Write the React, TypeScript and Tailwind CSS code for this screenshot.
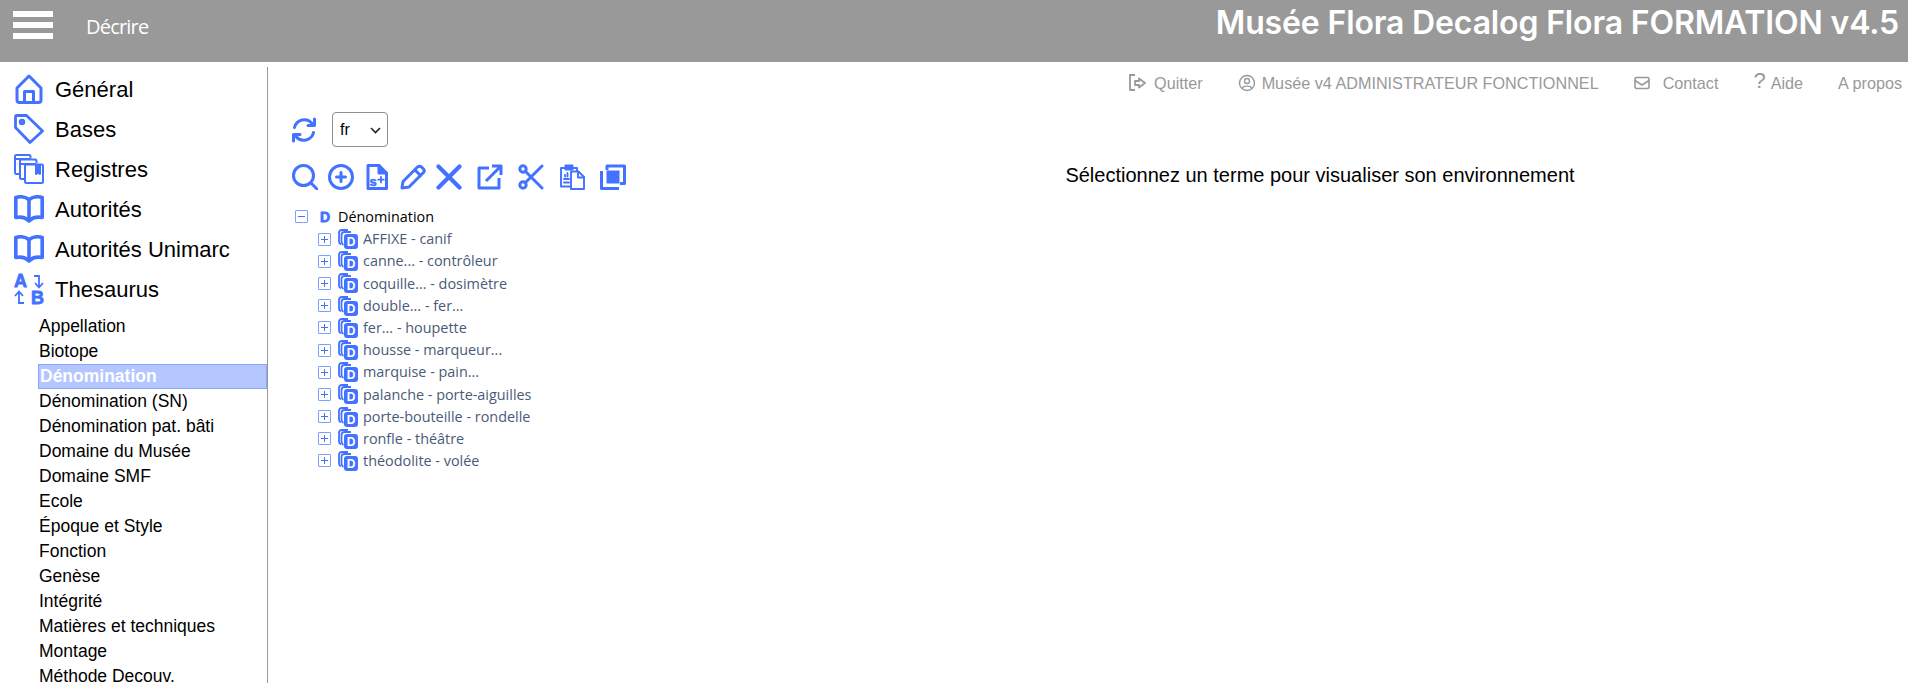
const BLUE = '#4272ff';

const subItems = [
  'Appellation', 'Biotope', 'Dénomination', 'Dénomination (SN)', 'Dénomination pat. bâti',
  'Domaine du Musée', 'Domaine SMF', 'Ecole', 'Époque et Style', 'Fonction', 'Genèse',
  'Intégrité', 'Matières et techniques', 'Montage', 'Méthode Decouv.',
];

const treeItems = [
  'AFFIXE - canif', 'canne... - contrôleur', 'coquille... - dosimètre', 'double... - fer...',
  'fer... - houpette', 'housse - marqueur...', 'marquise - pain...', 'palanche - porte-aiguilles',
  'porte-bouteille - rondelle', 'ronfle - théâtre', 'théodolite - volée',
];

function HouseIcon() {
  return (
    <svg width="30" height="30" viewBox="0 0 30 30" fill="none" stroke={BLUE} strokeWidth="3" strokeLinejoin="round">
      <path d="M15 2 L27 14 V26 Q27 28.5 24.5 28.5 H5.5 Q3 28.5 3 26 V14 Z" />
      <path d="M10.5 28 V17.5 H19.5 V28" />
    </svg>
  );
}

function TagIcon() {
  return (
    <svg width="30" height="30" viewBox="0 0 30 30" fill="none" stroke={BLUE} strokeWidth="2.8" strokeLinejoin="round">
      <path d="M1.5 3 Q1.5 1.5 3 1.5 H12.5 L28.5 17 L16 28.5 L1.5 13.5 Z" />
      <circle cx="8" cy="8" r="1.8" />
    </svg>
  );
}

function RegistersIcon() {
  return (
    <svg width="30" height="30" viewBox="0 0 30 30" fill="none" stroke={BLUE} strokeWidth="2" strokeLinejoin="round">
      <path d="M5 20 H2.5 Q1 20 1 18.5 V2.5 Q1 1 2.5 1 H15 Q16.5 1 16.5 2.5 V4.5" />
      <path d="M1 5 H16" />
      <path d="M10 25 H7.5 Q6 25 6 23.5 V7 Q6 5.5 7.5 5.5 H21 Q22.5 5.5 22.5 7 V9" />
      <path d="M6 10 H22" />
      <rect x="11" y="10.5" width="18" height="18.5" rx="1.5" />
      <path d="M22 11 V20 L24 18.5 L26 20 V11" fill={BLUE} />
    </svg>
  );
}

function BookIcon() {
  return (
    <svg width="30" height="28" viewBox="0 0 30 28" fill="none" stroke={BLUE} strokeWidth="3.6" strokeLinejoin="round">
      <path d="M1.8 2.5 C7 1 11.5 2 15 4.5 C18.5 2 23 1 28.2 2.5 V22.5 C23 21.5 18.5 22.5 15 26 C11.5 22.5 7 21.5 1.8 22.5 Z" />
      <path d="M15 4.5 V26" />
    </svg>
  );
}

function ThesaurusIcon() {
  return (
    <svg width="30" height="38" viewBox="0 -4 30 38" fill={BLUE}>
      <text x="0" y="13" fontFamily="Liberation Sans, sans-serif" fontWeight="700" fontSize="18" stroke={BLUE} strokeWidth="0.8">A</text>
      <text x="17" y="29.5" fontFamily="Liberation Sans, sans-serif" fontWeight="700" fontSize="18" stroke={BLUE} strokeWidth="0.8">B</text>
      <g fill="none" stroke={BLUE} strokeWidth="1.8">
        <path d="M20 2 H25 V13 M21 9 L25 13.5 L29 9" />
        <path d="M10 29 H5 V18 M1 22 L5 17.5 L9 22" />
      </g>
    </svg>
  );
}

function RefreshIcon() {
  return (
    <svg width="26" height="26" viewBox="0 0 26 26" fill="none" stroke={BLUE} strokeWidth="3" strokeLinejoin="round" strokeLinecap="round">
      <path d="M3.5 10.5 A10 10 0 0 1 21 6.5" />
      <path d="M23.5 2 V8.5 H17" />
      <path d="M22.5 15.5 A10 10 0 0 1 5 19.5" />
      <path d="M2.5 24 V17.5 H9" />
    </svg>
  );
}

function ToolIcon({ children }: { children: React.ReactNode }) {
  return (
    <svg width="26" height="26" viewBox="0 0 26 26" fill="none" stroke={BLUE} strokeWidth="3" strokeLinejoin="round" strokeLinecap="round">
      {children}
    </svg>
  );
}

function StackedD() {
  return (
    <svg width="20" height="20" viewBox="0 0 20 20" className="block shrink-0">
      <g fill="none" stroke={BLUE} strokeWidth="1.8">
        <path d="M3 15 Q1 15 1 12 V4 Q1 1 4 1 H10" />
        <path d="M5.5 16 Q3.5 15 3.5 12 V6 Q3.5 3 6.5 3 H13" />
      </g>
      <rect x="6" y="5" width="14" height="15" rx="3" fill={BLUE} />
      <text x="13" y="17" textAnchor="middle" fill="white" fontFamily="Liberation Sans, sans-serif" fontWeight="700" fontSize="12">D</text>
    </svg>
  );
}

function TreeBox({ open }: { open?: boolean }) {
  return (
    <span className="relative w-[13px] h-[13px] shrink-0 border border-[#7f9fff] rounded-[1px] bg-white">
      <span className="absolute left-[2px] top-[5px] w-[7px] h-px bg-[#4272ff]" />
      {!open && <span className="absolute left-[5px] top-[2px] w-px h-[7px] bg-[#4272ff]" />}
    </span>
  );
}

const mainNav = [
  { label: 'Général', icon: <HouseIcon /> },
  { label: 'Bases', icon: <TagIcon /> },
  { label: 'Registres', icon: <RegistersIcon /> },
  { label: 'Autorités', icon: <BookIcon /> },
  { label: 'Autorités Unimarc', icon: <BookIcon /> },
  { label: 'Thesaurus', icon: <ThesaurusIcon /> },
];

export default function App() {
  return (
    <div className="w-[1908px] h-[683px] overflow-hidden bg-white flex flex-col font-['Liberation_Sans',Arial,sans-serif]">
      <header className="h-[62px] shrink-0 bg-[#999999] flex items-start">
        <div className="ml-[13px] mt-[11px] w-[40px] flex flex-col gap-[5.5px]">
          <span className="h-[5.5px] bg-white" />
          <span className="h-[5.5px] bg-white" />
          <span className="h-[5.5px] bg-white" />
        </div>
        <span className="ml-[33px] mt-[13px] text-[20px] leading-[28px] text-white font-['Open_Sans',sans-serif] tracking-[-0.8px]">Décrire</span>
        <h1 className="ml-auto mr-[9px] mt-[2px] text-[32px] leading-[42px] font-semibold tracking-[-0.15px] text-white font-['Inter',sans-serif]">Musée Flora Decalog Flora FORMATION v4.5</h1>
      </header>

      <div className="flex-1 flex min-h-0">
        <aside className="w-[268px] shrink-0 mt-[5px] border-r border-[#999999] pt-[2px] overflow-hidden">
          {mainNav.map(item => (
            <div key={item.label} className="h-[40px] flex items-center pl-[14px] gap-[11px] text-[22px] text-black">
              <span className="w-[30px] flex justify-center">{item.icon}</span>
              <span>{item.label}</span>
            </div>
          ))}
          <ul className="mt-[5px] ml-[38px]">
            {subItems.map(s => (
              <li
                key={s}
                className={s === 'Dénomination'
                  ? 'h-[25px] leading-[23px] pl-[1px] text-[17.5px] font-bold text-white bg-[#b3c6ff] border border-[#8aa5ff]'
                  : 'h-[25px] leading-[25px] pl-[1px] text-[17.5px] text-black'}
              >
                {s}
              </li>
            ))}
          </ul>
        </aside>

        <main className="flex-1 min-w-0 flex flex-col">
          <div className="h-[40px] mt-[1px] flex items-center justify-end pr-[6px] text-[16.2px] text-[#999999]">
            <svg width="20" height="20" viewBox="0 0 20 20" fill="none" stroke="#999999" strokeWidth="1.8" strokeLinejoin="round">
              <path d="M7 2 H2 V17 H7" />
              <path d="M11 5.5 L17 10 L11 14.5 V12 H7 V8 H11 Z" />
            </svg>
            <span className="ml-[6px]">Quitter</span>
            <svg className="ml-[35px]" width="18" height="18" viewBox="0 0 18 18" fill="none" stroke="#999999" strokeWidth="1.4">
              <circle cx="9" cy="9" r="7.5" />
              <circle cx="9" cy="7" r="2.5" />
              <path d="M4.5 14 C5.5 11.5 12.5 11.5 13.5 14" />
            </svg>
            <span className="ml-[6px]">Musée v4 ADMINISTRATEUR FONCTIONNEL</span>
            <svg className="ml-[35px]" width="16" height="14" viewBox="0 0 16 14" fill="none" stroke="#999999" strokeWidth="1.6" strokeLinejoin="round">
              <rect x="1" y="1.5" width="14" height="11" rx="1.5" />
              <path d="M1 4.5 L8 9 L15 4.5" />
            </svg>
            <span className="ml-[13px]">Contact</span>
            <span className="ml-[35px] text-[22px] leading-none -mt-[4px]">?</span>
            <span className="ml-[5px]">Aide</span>
            <span className="ml-[35px]">A propos</span>
          </div>

          <div className="flex flex-1 min-h-0">
            <div className="w-[484px] shrink-0">
              <div className="mt-[9px] ml-[23px] flex items-center gap-[15px]">
                <RefreshIcon />
                <div className="relative w-[56px] h-[35px]">
                  <select defaultValue="fr" className="w-full h-full appearance-none pl-[7px] text-[16px] text-black bg-white border border-[#8f8f8f] rounded-[4px]">
                    <option value="fr">fr</option>
                  </select>
                  <svg className="absolute right-[7px] top-[15px] pointer-events-none" width="11" height="7" viewBox="0 0 11 7" fill="none" stroke="#222222" strokeWidth="1.6">
                    <path d="M1 1 L5.5 5.5 L10 1" />
                  </svg>
                </div>
              </div>

              <div className="mt-[17px] ml-[24px] flex items-center">
                <div className="flex items-center gap-[10px]">
                  <ToolIcon>
                    <circle cx="11.5" cy="11.5" r="10" />
                    <path d="M19 19 L25 25" />
                  </ToolIcon>
                  <ToolIcon>
                    <circle cx="13" cy="13" r="11.5" />
                    <path d="M13 8.5 V17.5 M8.5 13 H17.5" />
                  </ToolIcon>
                  <ToolIcon>
                    <path d="M4 1.5 H15 L22.5 9 V24.5 H4 Z" />
                    <path d="M15 1.5 V9 H22.5" fill={BLUE} />
                    <text x="5.5" y="22" stroke={BLUE} strokeWidth="0.5" fill={BLUE} fontFamily="Liberation Sans, sans-serif" fontWeight="700" fontSize="13">s</text>
                    <path d="M17 13 V18.5 M14.2 15.7 H19.8" strokeWidth="1.8" />
                  </ToolIcon>
                  <ToolIcon>
                    <path d="M2 24 L3 17.5 L17.5 3 Q19.5 1.5 21.5 3 L23.5 5 Q25 7 23.5 8.5 L9 23 Z" />
                    <path d="M15 6 L20.5 11.5" />
                  </ToolIcon>
                  <ToolIcon>
                    <path d="M2.5 2.5 L23.5 23.5 M23.5 2.5 L2.5 23.5" strokeWidth="4.2" />
                  </ToolIcon>
                </div>
                <div className="ml-[15px] flex items-center gap-[15px]">
                  <ToolIcon>
                    <path d="M12 4 H2 V24 H22 V14" strokeLinecap="butt" />
                    <path d="M9 17 L24 2 M15 2 H24 V11" strokeLinecap="butt" />
                  </ToolIcon>
                  <ToolIcon>
                    <circle cx="5" cy="5" r="3.2" />
                    <circle cx="5" cy="21" r="3.2" />
                    <path d="M7.5 7.5 L24 24 M7.5 18.5 L24 2" />
                  </ToolIcon>
                  <ToolIcon>
                    <g strokeWidth="1.9">
                      <path d="M11 22.5 H2 V4 H6 M14 4 H18 V7" />
                      <rect x="6.5" y="1.5" width="7" height="4" fill={BLUE} />
                      <path d="M5 18.5 H10 M5 15 H10 M6 11 V12.5 M8.5 9 V12.5" />
                      <path d="M12 7.5 H19.5 L25 13 V25 H12 Z" fill="white" />
                      <path d="M19 8 V13.5 H25" />
                    </g>
                  </ToolIcon>
                  <ToolIcon>
                    <path d="M7 6 V2 H24.5 V19.5 H20" strokeLinecap="butt" />
                    <path d="M1.5 7 V24.5 H19 " strokeLinecap="butt" />
                    <rect x="6.5" y="6.5" width="13" height="13" fill={BLUE} stroke="none" />
                  </ToolIcon>
                </div>
              </div>

              <div className="mt-[15px] ml-[27px] text-[14.4px] font-['Open_Sans',sans-serif]">
                <div className="h-[23px] flex items-center">
                  <TreeBox open />
                  <svg className="ml-[11px]" width="12" height="16" viewBox="0 -2 12 16">
                    <text x="6" y="11" textAnchor="middle" fill={BLUE} stroke={BLUE} strokeWidth="0.8" fontFamily="Liberation Sans, sans-serif" fontWeight="700" fontSize="14">D</text>
                  </svg>
                  <span className="ml-[7px] text-black">Dénomination</span>
                </div>
                {treeItems.map(t => (
                  <div key={t} className="h-[22.2px] flex items-center pl-[23px]">
                    <TreeBox />
                    <span className="ml-[7px]"><StackedD /></span>
                    <span className="ml-[5px] text-[#4a5a78]">{t}</span>
                  </div>
                ))}
              </div>
            </div>

            <div className="flex-1 pr-[20px] pt-[60px] text-center">
              <p className="text-[20px] leading-[24px] text-black">Sélectionnez un terme pour visualiser son environnement</p>
            </div>
          </div>
        </main>
      </div>
    </div>
  );
}
